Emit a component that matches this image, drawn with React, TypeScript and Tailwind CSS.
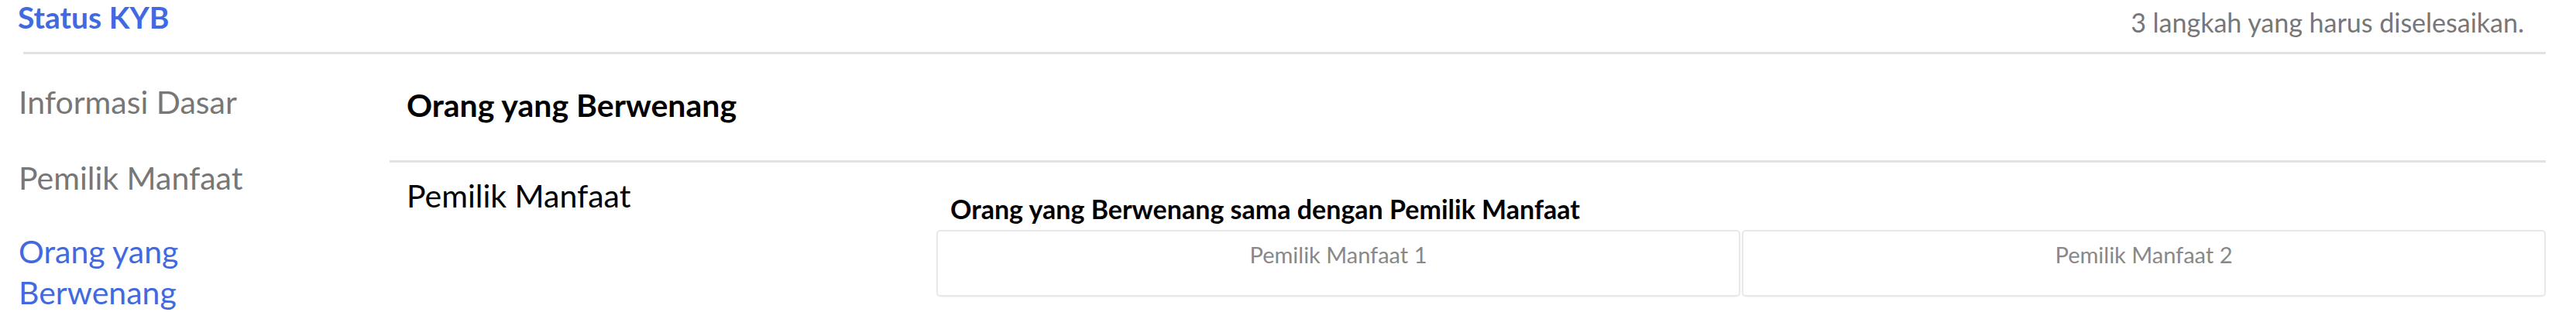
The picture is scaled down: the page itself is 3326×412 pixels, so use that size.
export default function App() {
  return (
    <div className="h-[412px] w-full overflow-hidden bg-white font-['Lato',sans-serif]">
      <header className="flex h-[67px] items-start justify-between pl-[23px] pr-[67px]">
        <h1 className="mt-[3px] text-[39px] font-bold leading-none text-[#4169e1]">Status KYB</h1>
        <p className="mt-[12px] text-[34px] leading-none text-[#777]">3 langkah yang harus diselesaikan.</p>
      </header>
      <div className="ml-[30px] mr-[39px] h-[3px] bg-[#e2e2e2]" />

      <div className="flex">
        <nav className="w-[503px] shrink-0 pl-[24px]">
          <ul className="w-[330px] text-[41px] leading-[53px]">
            <li className="mt-[35px] text-[#777]">Informasi Dasar</li>
            <li className="mt-[45px] text-[#777]">Pemilik Manfaat</li>
            <li className="mt-[42px] text-[#4169e1]">Orang yang Berwenang</li>
          </ul>
        </nav>

        <main className="mr-[39px] flex-1">
          <h2 className="mt-[45px] pl-[22px] text-[41px] font-bold leading-none text-black">Orang yang Berwenang</h2>
          <div className="mt-[51px] h-[3px] bg-[#e2e2e2]" />

          <div className="flex pl-[22px]">
            <div className="mt-[22px] w-[684px] shrink-0 text-[41px] leading-none text-black">Pemilik Manfaat</div>
            <div className="flex-1">
              <h3 className="mt-[43px] pl-[18px] text-[34px] font-bold leading-none text-black">
                Orang yang Berwenang sama dengan Pemilik Manfaat
              </h3>
              <div className="mt-[10px] grid grid-cols-2 gap-[2px]">
                {["Pemilik Manfaat 1", "Pemilik Manfaat 2"].map((label) => (
                  <div
                    key={label}
                    className="h-[86px] rounded-[5px] border-2 border-[#e8e8e8] pt-[15px] text-center text-[29px] leading-none text-[#888] shadow-[0_1px_2px_rgba(0,0,0,0.05)]"
                  >
                    {label}
                  </div>
                ))}
              </div>
            </div>
          </div>
        </main>
      </div>
    </div>
  );
}
